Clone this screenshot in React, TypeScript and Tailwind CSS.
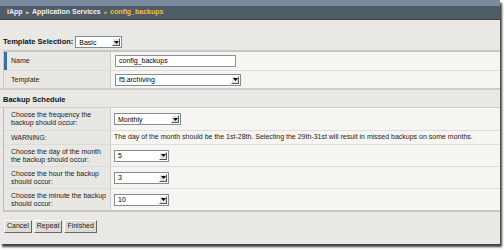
import React from "react";

function Sel({ w, value }: { w: string; value: string }) {
  return (
    <div className={`${w} h-[12px] bg-white border border-[#7f8d99] flex items-center justify-between pl-[3px] pr-[1px]`}>
      <span className="text-[7px] leading-none text-black">{value}</span>
      <div className="w-[8px] h-[8px] bg-[#e4e2de] border border-t-[#fff] border-l-[#fff] border-r-[#555] border-b-[#555] flex items-center justify-center">
        <svg width="5" height="3" viewBox="0 0 5 3"><path d="M0 0h5L2.5 3z" fill="#000" /></svg>
      </div>
    </div>
  );
}

function Row({ label, children, h, first, mark }: { label: React.ReactNode; children: React.ReactNode; h: string; first?: boolean; mark?: boolean }) {
  return (
    <div className={`grid grid-cols-[107px_1fr] ${h} ${first ? "" : "border-t border-[#dedcd8]"}`}>
      <div className="bg-[#e8e7e3] border-r border-[#cfcdc9] flex items-center text-[7px] leading-[8px] text-[#222]">
        <div className={`w-[3px] self-stretch ${mark ? "bg-[#3d6ea5]" : ""}`} />
        <div className="pl-[4px]">{label}</div>
      </div>
      <div className="bg-[#f6f5f2] flex items-center pl-[2px]">{children}</div>
    </div>
  );
}

export default function App() {
  return (
    <div className="w-[504px] h-[250px] bg-white overflow-hidden font-['Liberation_Sans',Arial,sans-serif]">
      <div className="w-[500px] h-[244px] bg-[#e9e8e4] shadow-[2px_3px_2px_rgba(0,0,0,0.75)] flex flex-col">
        <div className="h-[6px] bg-[#7a8b9e]" />
        <div className="h-[14px] bg-[#505c68] border-b border-[#36404a] flex items-center pl-[7px] text-[7px] font-bold text-[#eef0f2] gap-[3px]">
          <span>iApp</span>
          <span className="text-[6px]">»</span>
          <span>Application Services</span>
          <span className="text-[6px] text-[#e8c33c]">»</span>
          <span className="text-[#e8c33c]">config_backups</span>
        </div>
        <div className="h-[30px] flex items-end pl-[3px] pb-[2px] gap-[2px]">
          <span className="text-[7.5px] font-bold text-[#111] mb-[1px]">Template Selection:</span>
          <Sel w="w-[47px]" value="Basic" />
        </div>
        <div className="ml-[3px] border-t-2 border-[#c9c7c3] border-l border-[#b9b7b3]">
          <Row h="h-[18px]" first mark label="Name">
            <div className="w-[121px] h-[12px] bg-white border border-[#8a949c] flex items-center pl-[3px] text-[7px] ml-[2px]">config_backups</div>
          </Row>
          <Row h="h-[18px]" label="Template">
            <div className="ml-[2px]"><Sel w="w-[126px]" value="f5.archiving" /></div>
          </Row>
        </div>
        <div className="h-[20px] border-t-2 border-[#c9c7c3] border-b border-[#cfcdc9] flex items-end pl-[3px] pb-[2px] text-[7.5px] font-bold text-[#111]">
          Backup Schedule
        </div>
        <div className="ml-[3px] border-l border-[#b9b7b3] border-b-2 border-b-[#c9c7c3]">
          <Row h="h-[22px]" first label={<span>Choose the frequency the<br />backup should occur:</span>}>
            <div className="ml-[1px]"><Sel w="w-[67px]" value="Monthly" /></div>
          </Row>
          <Row h="h-[14px]" label="WARNING:">
            <span className="text-[7px] text-[#222] pl-[1px]">The day of the month should be the 1st-28th. Selecting the 29th-31st will result in missed backups on some months.</span>
          </Row>
          <Row h="h-[22px]" label={<span>Choose the day of the month<br />the backup should occur:</span>}>
            <div className="ml-[1px]"><Sel w="w-[55px]" value="5" /></div>
          </Row>
          <Row h="h-[22px]" label={<span>Choose the hour the backup<br />should occur:</span>}>
            <div className="ml-[1px]"><Sel w="w-[55px]" value="3" /></div>
          </Row>
          <Row h="h-[22px]" label={<span>Choose the minute the backup<br />should occur:</span>}>
            <div className="ml-[1px]"><Sel w="w-[55px]" value="10" /></div>
          </Row>
        </div>
        <div className="flex gap-[2px] pl-[4px] pt-[8px]">
          {["Cancel", "Repeat", "Finished"].map((b) => (
            <div key={b} className="h-[13px] px-[2px] bg-[#dddbd6] border border-t-[#fff] border-l-[#fff] border-r-[#666] border-b-[#666] flex items-center text-[7px] text-[#222]">{b}</div>
          ))}
        </div>
      </div>
    </div>
  );
}
